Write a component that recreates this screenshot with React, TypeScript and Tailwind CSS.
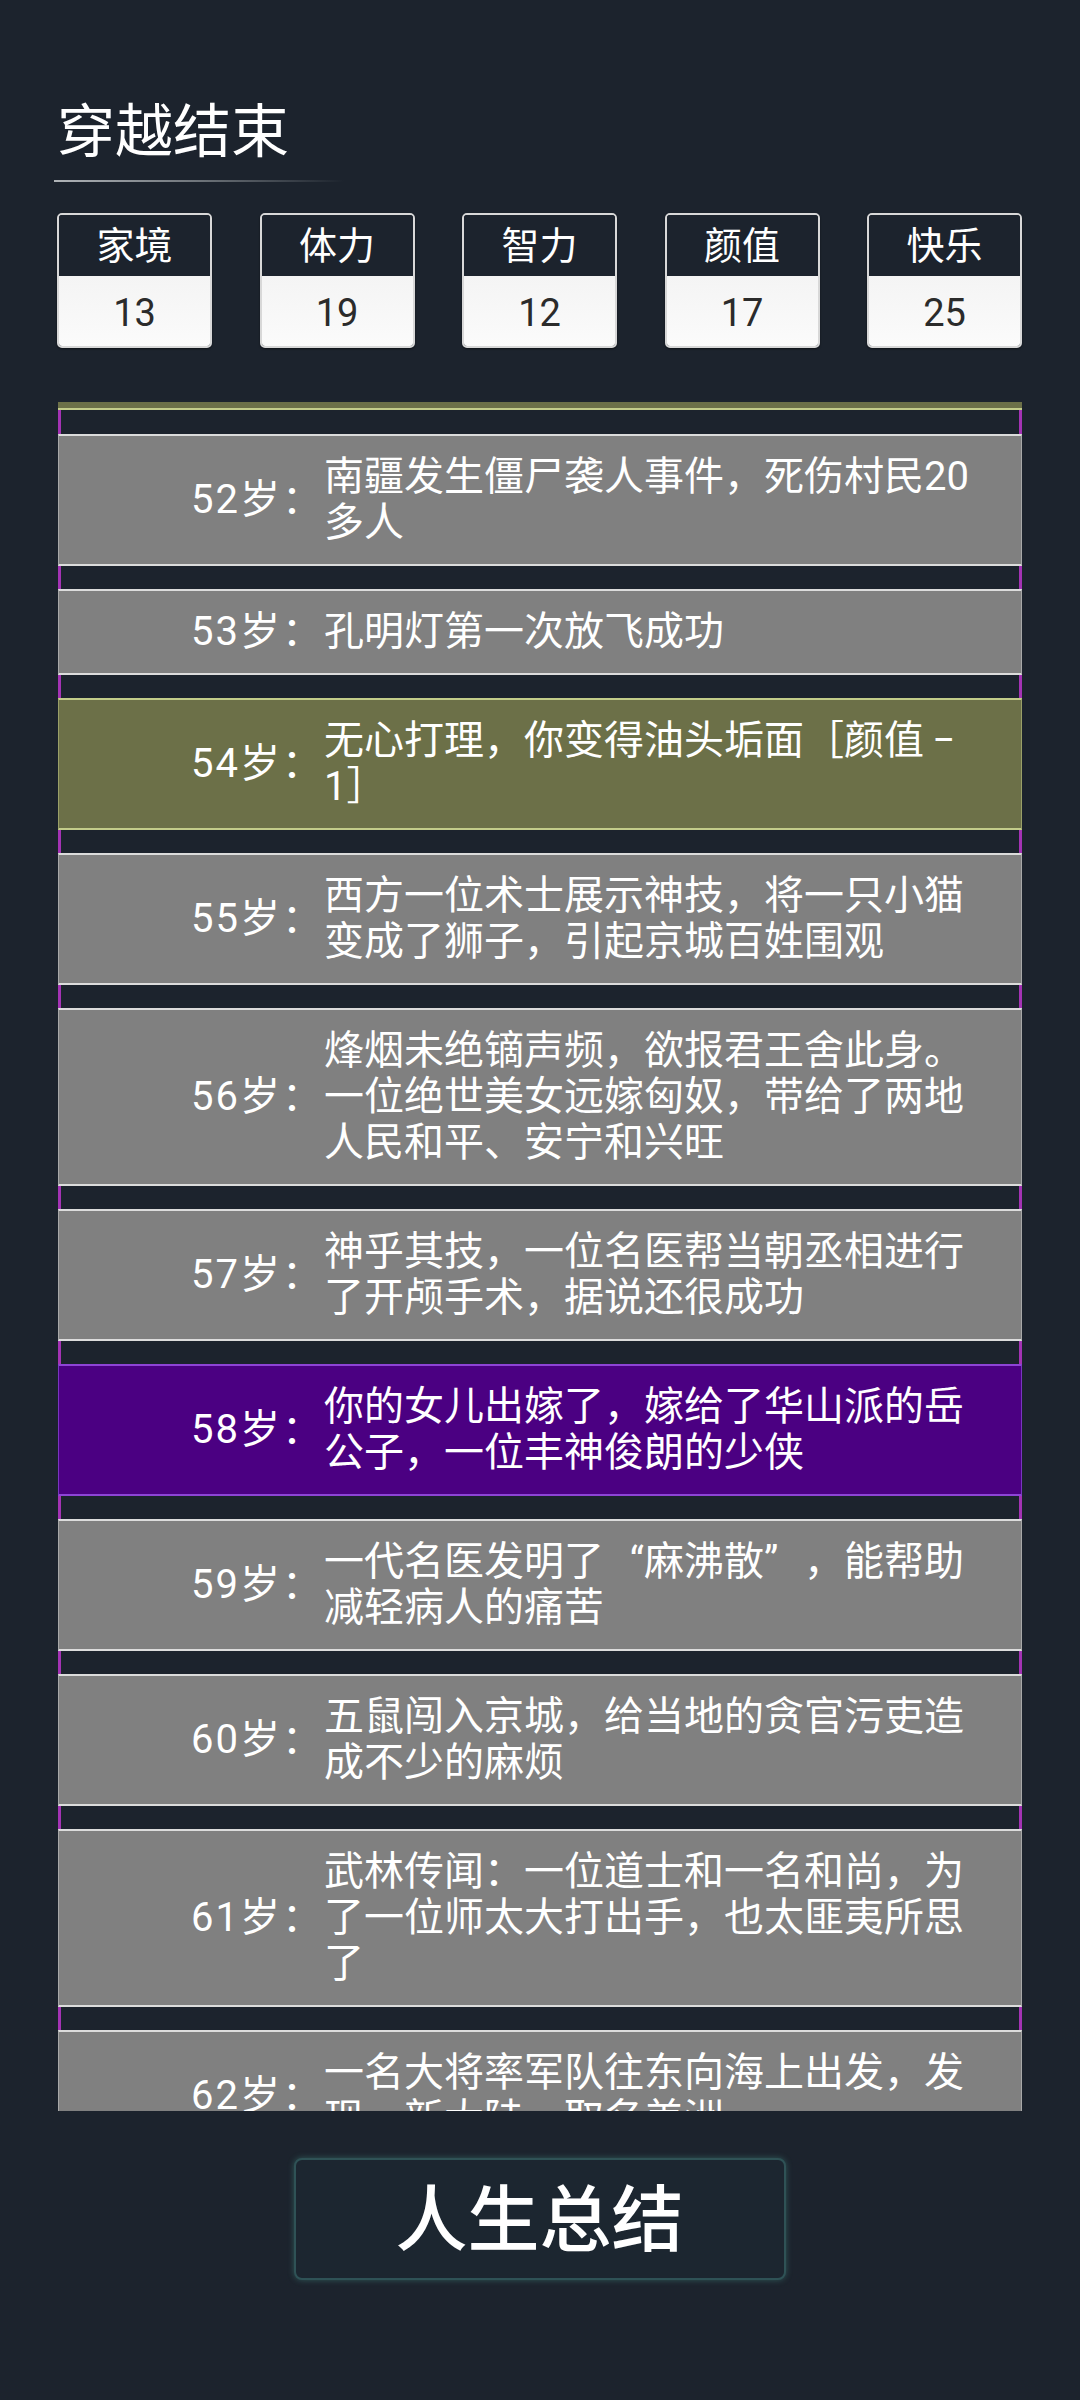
import React from 'react';

type Tone = 'gray' | 'olive' | 'purple';

type Entry = {
  age: number;
  lines: React.ReactNode[];
  tone: Tone;
};

const stats = [
  { label: '家境', value: 13 },
  { label: '体力', value: 19 },
  { label: '智力', value: 12 },
  { label: '颜值', value: 17 },
  { label: '快乐', value: 25 },
];

// full-width punctuation cell, one em wide
const Fw = ({ children, align = 'text-center' }: { children: React.ReactNode; align?: string }) => (
  <span className={'inline-block w-[40px] leading-none ' + align}>{children}</span>
);

const entries: Entry[] = [
  { age: 52, lines: ['南疆发生僵尸袭人事件，死伤村民20', '多人'], tone: 'gray' },
  { age: 53, lines: ['孔明灯第一次放飞成功'], tone: 'gray' },
  {
    age: 54,
    lines: [
      <>
        无心打理，你变得油头垢面［颜值<Fw>−</Fw>
      </>,
      '1］',
    ],
    tone: 'olive',
  },
  { age: 55, lines: ['西方一位术士展示神技，将一只小猫', '变成了狮子，引起京城百姓围观'], tone: 'gray' },
  {
    age: 56,
    lines: ['烽烟未绝镝声频，欲报君王舍此身。', '一位绝世美女远嫁匈奴，带给了两地', '人民和平、安宁和兴旺'],
    tone: 'gray',
  },
  { age: 57, lines: ['神乎其技，一位名医帮当朝丞相进行', '了开颅手术，据说还很成功'], tone: 'gray' },
  { age: 58, lines: ['你的女儿出嫁了，嫁给了华山派的岳', '公子，一位丰神俊朗的少侠'], tone: 'purple' },
  {
    age: 59,
    lines: [
      <>
        一代名医发明了<Fw align="text-right">“</Fw>麻沸散<Fw align="text-left">”</Fw>，能帮助
      </>,
      '减轻病人的痛苦',
    ],
    tone: 'gray',
  },
  { age: 60, lines: ['五鼠闯入京城，给当地的贪官污吏造', '成不少的麻烦'], tone: 'gray' },
  {
    age: 61,
    lines: ['武林传闻：一位道士和一名和尚，为', '了一位师太大打出手，也太匪夷所思', '了'],
    tone: 'gray',
  },
  { age: 62, lines: ['一名大将率军队往东向海上出发，发', '现一新大陆，取名美洲'], tone: 'gray' },
];

const toneClass: Record<Tone, string> = {
  gray: 'bg-[#808080] border-y-2 border-y-[#dcdcdc] border-x border-x-[#a8a8a8]',
  olive: 'bg-[#6c7048] border-y-2 border-y-[#c3cc8a] border-x border-x-[#9aa068]',
  purple: 'bg-[#4b0082] border-y-2 border-y-[#8e44d6] border-x border-x-[#7a35c0]',
};

function Spacer({ h = 'h-[23px]' }: { h?: string }) {
  return <div className={h + ' shrink-0 border-x-[3px] border-x-[#a433b4]'} />;
}

function Row({ entry }: { entry: Entry }) {
  return (
    <div className={'flex shrink-0 items-center py-[18px] text-white ' + toneClass[entry.tone]}>
      <div className="w-[265px] shrink-0 text-right text-[40px] leading-[46px] tracking-[2px]">{entry.age}岁：</div>
      <div className="text-[40px] leading-[46px]">
        {entry.lines.map((l, i) => (
          <div key={i} className="h-[46px] overflow-visible whitespace-nowrap">
            {l}
          </div>
        ))}
      </div>
    </div>
  );
}

export default function App() {
  return (
    <div className="min-h-[2400px] bg-[#1c232d] pl-[57px] pr-[58px] font-['Roboto','Noto_Sans_CJK_SC',sans-serif]">
      <div className="pt-[103px]">
        <h1 className="text-[58px] leading-[58px] font-normal text-white">穿越结束</h1>
      </div>
      <div className="mt-[19px] -ml-[3px] h-[2px] w-[290px] bg-linear-to-r from-[#b0b4b8] via-[#6e747a] to-transparent" />

      <div className="mt-[31px] flex justify-between">
        {stats.map((s) => (
          <div
            key={s.label}
            className="w-[155px] overflow-hidden rounded-[5px] border-2 border-[#d8d8d8] shadow-[0_1px_2px_rgba(0,0,0,0.5)]"
          >
            <div className="flex h-[61px] items-center justify-center bg-[#1c232d] pt-[2px] text-[38px] text-white">
              {s.label}
            </div>
            <div className="flex h-[70px] items-center justify-center bg-linear-to-b from-[#f4f4f4] to-[#fbfbfb] pt-[4px] text-[38px] text-[#2b2b2b]">
              {s.value}
            </div>
          </div>
        ))}
      </div>

      <div className="mt-[54px] ml-[1px] flex h-[1709px] flex-col overflow-hidden">
        <div className="h-[8px] shrink-0 border-b-2 border-b-[#c3cc8a] bg-[#6c7048]" />
        <Spacer h="h-[24px]" />
        {entries.map((e, i) => (
          <React.Fragment key={e.age}>
            {i > 0 && <Spacer />}
            <Row entry={e} />
          </React.Fragment>
        ))}
      </div>

      <div className="mt-[47px] flex justify-center">
        <button className="flex h-[122px] w-[492px] items-center justify-center rounded-[8px] border-2 border-[#2f5256] bg-[#1c2630] pt-[4px] text-[72px] font-medium text-white shadow-[0_0_6px_rgba(70,150,140,0.45)]">
          人生总结
        </button>
      </div>
    </div>
  );
}
